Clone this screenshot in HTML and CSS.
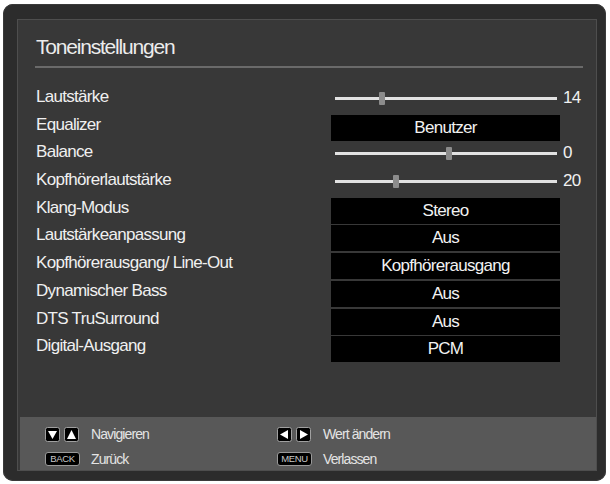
FILE: index.html
```html
<!DOCTYPE html>
<html lang="de">
<head>
<meta charset="utf-8">
<title>Toneinstellungen</title>
<link rel="stylesheet" href="styles.css">
</head>
<body>
<div class="frame">
  <div class="panel">
    <div class="content">
      <h1 class="title">Toneinstellungen</h1>
      <div class="rule"></div>
      <div class="rows">
        <div class="row"><span class="label">Lautstärke</span>
          <div class="slider"><div class="track"><span class="thumb" style="left:44px"></span></div><span class="num">14</span></div></div>
        <div class="row"><span class="label">Equalizer</span><div class="box">Benutzer</div></div>
        <div class="row"><span class="label">Balance</span>
          <div class="slider"><div class="track"><span class="thumb" style="left:111px"></span></div><span class="num">0</span></div></div>
        <div class="row"><span class="label">Kopfhörerlautstärke</span>
          <div class="slider"><div class="track"><span class="thumb" style="left:58px"></span></div><span class="num">20</span></div></div>
        <div class="row"><span class="label">Klang-Modus</span><div class="box">Stereo</div></div>
        <div class="row"><span class="label">Lautstärkeanpassung</span><div class="box">Aus</div></div>
        <div class="row"><span class="label">Kopfhörerausgang/ Line-Out</span><div class="box">Kopfhörerausgang</div></div>
        <div class="row"><span class="label">Dynamischer Bass</span><div class="box">Aus</div></div>
        <div class="row"><span class="label">DTS TruSurround</span><div class="box">Aus</div></div>
        <div class="row"><span class="label">Digital-Ausgang</span><div class="box">PCM</div></div>
      </div>
    </div>
    <div class="footer">
      <div class="hint">
        <span class="keys">
          <svg class="key" viewBox="0 0 15 15" width="15" height="15"><rect x="0.5" y="0.5" width="14" height="14" rx="2" fill="#000" stroke="#a0a0a0"/><polygon points="3,4 12,4 7.5,12" fill="#fff"/></svg>
          <svg class="key" viewBox="0 0 15 15" width="15" height="15"><rect x="0.5" y="0.5" width="14" height="14" rx="2" fill="#000" stroke="#a0a0a0"/><polygon points="3,12 12,12 7.5,3" fill="#fff"/></svg>
        </span>
        <span class="hint-text">Navigieren</span>
      </div>
      <div class="hint">
        <span class="keys">
          <svg class="key" viewBox="0 0 15 15" width="15" height="15"><rect x="0.5" y="0.5" width="14" height="14" rx="2" fill="#000" stroke="#a0a0a0"/><polygon points="11,3 11,12 3,7.5" fill="#fff"/></svg>
          <svg class="key" viewBox="0 0 15 15" width="15" height="15"><rect x="0.5" y="0.5" width="14" height="14" rx="2" fill="#000" stroke="#a0a0a0"/><polygon points="4,3 4,12 12,7.5" fill="#fff"/></svg>
        </span>
        <span class="hint-text">Wert ändern</span>
      </div>
      <div class="hint">
        <span class="keys"><span class="btn">BACK</span></span>
        <span class="hint-text">Zurück</span>
      </div>
      <div class="hint">
        <span class="keys"><span class="btn">MENU</span></span>
        <span class="hint-text">Verlassen</span>
      </div>
    </div>
  </div>
</div>
</body>
</html>
```

FILE: styles.css
```css
* { box-sizing: border-box; }

html, body {
  margin: 0;
  padding: 0;
  background: #ffffff;
}

body {
  font-family: "Liberation Sans", Arial, sans-serif;
  color: #f0f0f0;
}

.frame {
  margin: 4px 0 0 3px;
  width: 603px;
  height: 477px;
  padding: 15px 9px 10px 14px;
  background: #2c2c2c;
  border-radius: 10px;
  box-shadow: inset 0 0 0 1px #3a3a3a;
}

.panel {
  height: 100%;
  border: 1px solid #4e4e4e;
  background: #383838;
  display: flex;
  flex-direction: column;
}

.content {
  flex: 1;
  padding-left: 18px;
}

.title {
  margin: 13px 0 0 0;
  font-size: 21px;
  font-weight: normal;
  line-height: 28px;
  letter-spacing: -1.2px;
  color: #ececec;
}

.rule {
  margin: 5px 0 0 -1px;
  width: 548px;
  height: 2px;
  background: #6a6a6a;
}

.rows {
  margin-top: 19px;
  display: flex;
  flex-direction: column;
  gap: 1.7px;
}

.row {
  display: flex;
  height: 26px;
}

.label {
  width: 295px;
  font-size: 17px;
  line-height: 20px;
  letter-spacing: -0.7px;
}

.box {
  width: 229px;
  height: 26px;
  background: #000;
  text-align: center;
  font-size: 17px;
  line-height: 26px;
  letter-spacing: -0.7px;
  color: #f2f2f2;
}

.slider {
  display: flex;
  align-items: center;
  margin-left: 4px;
  height: 22px;
}

.track {
  position: relative;
  width: 222px;
  height: 3px;
  background: #e2e2e2;
}

.thumb {
  position: absolute;
  top: -5px;
  width: 6px;
  height: 13px;
  background: #8c8c8c;
  border-radius: 1px;
}

.num {
  margin-left: 6px;
  font-size: 17px;
  line-height: 20px;
  letter-spacing: -0.7px;
}

.footer {
  height: 53px;
  margin: 0 0 0 2px;
  background: #585858;
  padding: 9px 0 0 25px;
  display: grid;
  grid-template-columns: 232px auto;
  row-gap: 6px;
}

.hint {
  display: flex;
  align-items: center;
  height: 16px;
}

.keys {
  display: flex;
  gap: 4px;
  width: 46px;
}

.key {
  display: block;
}

.btn {
  display: block;
  width: 35px;
  height: 14px;
  background: #000;
  border: 1px solid #9a9a9a;
  border-radius: 3px;
  font-size: 9.5px;
  line-height: 12px;
  letter-spacing: -0.4px;
  text-align: center;
  color: #c8c8c8;
}

.hint-text {
  font-size: 14px;
  line-height: 16px;
  letter-spacing: -0.9px;
  color: #e4e4e4;
}
```
